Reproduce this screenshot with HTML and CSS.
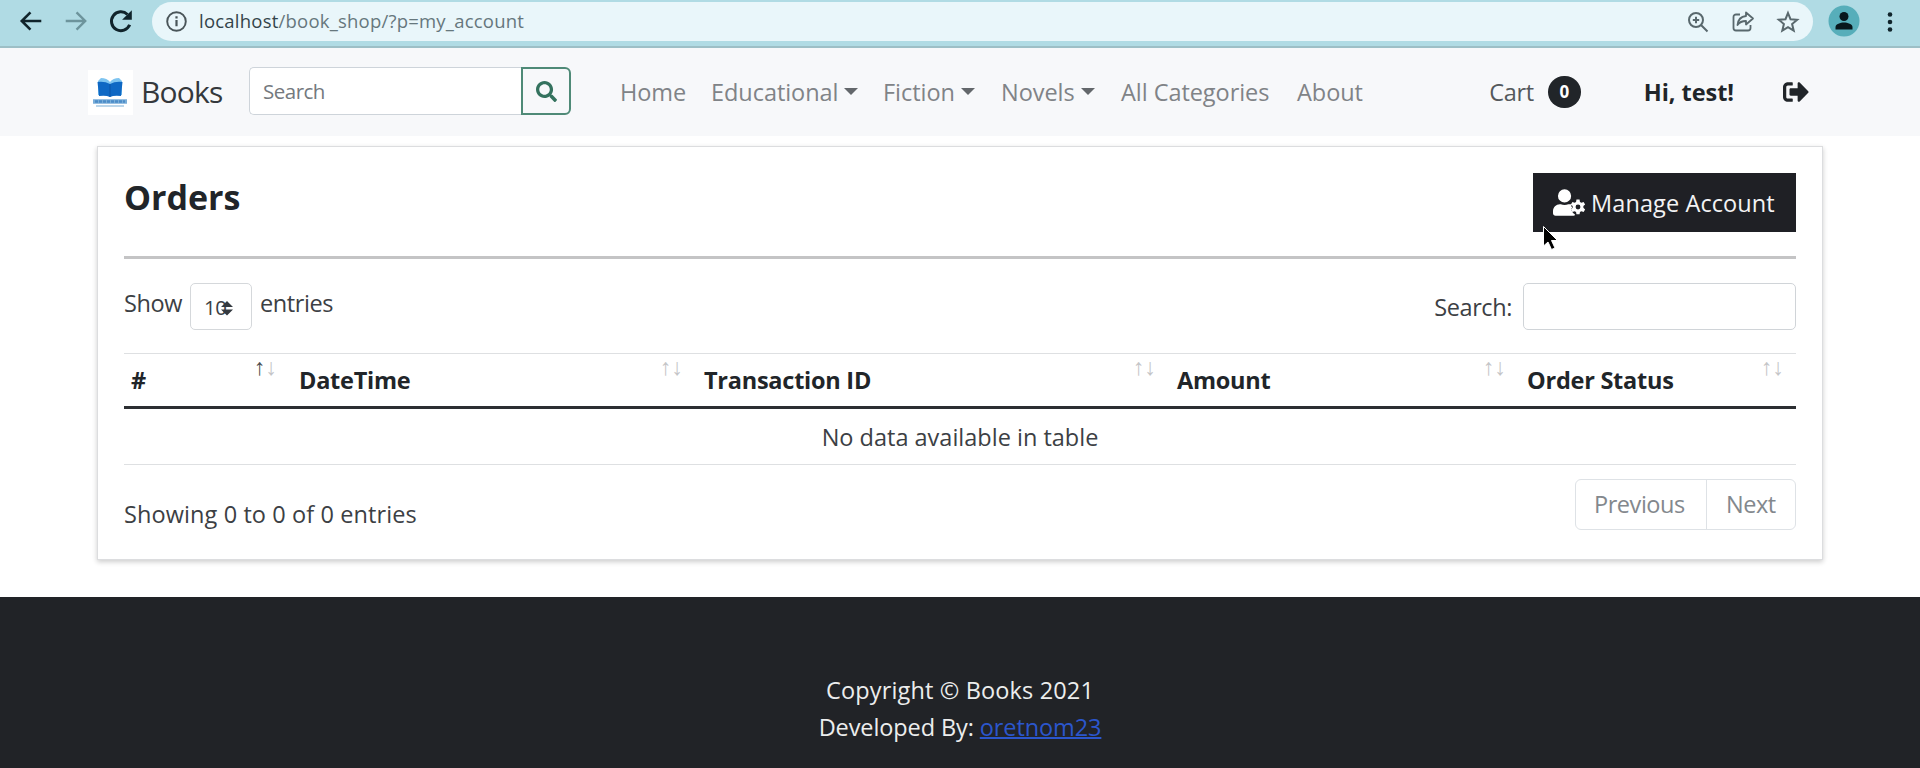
FILE: index.html
```html
<!DOCTYPE html>
<html lang="en">
<head>
<meta charset="utf-8">
<title>Books</title>
<link rel="stylesheet" href="styles.css">
</head>
<body>
<header class="browser">
  <div class="browser-nav">
    <svg class="ico" viewBox="0 0 24 24" width="26" height="26"><path d="M21.500 12H3.500M11.500 4L3.500 12l8 8" fill="none" stroke="#10242b" stroke-width="2.400"/></svg>
    <svg class="ico" viewBox="0 0 24 24" width="26" height="26"><path d="M2.500 12h18M12.500 4l8 8-8 8" fill="none" stroke="#6d949c" stroke-width="2.200"/></svg>
    <svg class="ico" viewBox="0 0 24 24" width="26" height="26"><path d="M20 15.500A8.700 8.700 0 1 1 18 6" fill="none" stroke="#10242b" stroke-width="2.800"/><path d="M22 2v8.800H13z" fill="#10242b"/></svg>
  </div>
  <div class="omnibox">
    <svg viewBox="0 0 24 24" width="23" height="23"><circle cx="12" cy="12" r="9.700" fill="none" stroke="#4a5559" stroke-width="2"/><path d="M12 10.500V17M12 6.500v2.300" stroke="#4a5559" stroke-width="2.300"/></svg>
    <span class="url"><span class="host">localhost</span>/book_shop/?p=my_account</span>
    <div class="omni-actions">
      <svg viewBox="0 0 24 24" width="24" height="24" fill="none" stroke="#59686d" stroke-width="2"><circle cx="10" cy="10" r="7"/><path d="M15 15l6.500 6.500M10 6.800v6.400M6.800 10h6.400"/></svg>
      <svg viewBox="0 0 24 24" width="24" height="24" fill="none" stroke="#59686d" stroke-width="1.800" stroke-linejoin="round"><path d="M9 4.500H5a2.500 2.500 0 0 0-2.500 2.500v11A2.500 2.500 0 0 0 5 20.500h12a2.500 2.500 0 0 0 2.500-2.500v-3"/><path d="M15 2.500l7 6-7 6v-3.500c-4 0-6.500 1-8.500 4 .5-5 3.500-8.500 8.500-9z"/></svg>
      <svg viewBox="0 0 24 24" width="24" height="24" fill="none" stroke="#59686d" stroke-width="2"><path d="M12 3l2.500 6.200 6.700.5-5.100 4.400 1.600 6.500-5.700-3.500-5.700 3.500 1.600-6.500-5.100-4.400 6.700-.5z"/></svg>
    </div>
  </div>
  <svg class="profile" viewBox="0 0 32 32" width="32" height="32"><circle cx="16" cy="16" r="15.500" fill="#57aeba"/><circle cx="16" cy="11.500" r="4.500" fill="#08171c"/><path d="M7.500 24.500v-2.500c0-3 5-4.500 8.500-4.500s8.500 1.500 8.500 4.500v2.500z" fill="#08171c"/></svg>
  <svg class="dots" viewBox="0 0 6 22" width="6" height="22" fill="#10242b"><circle cx="3" cy="3.500" r="2.300"/><circle cx="3" cy="11" r="2.300"/><circle cx="3" cy="18.500" r="2.300"/></svg>
</header>

<nav class="navbar">
  <a class="brand">
    <span class="logo"><svg viewBox="0 0 45 45" width="45" height="45"><path d="M10 11l3-3q6 0 9 4 3-4 9-4l3 3v14H10z" fill="#7ec4f0"/><path d="M9.500 12q7-1 12.500 2 5.500-3 12.500-2l-1.500 14q-7-1-11 1-4-2-11-1z" fill="#0f68c4"/><path d="M22 14v13" stroke="#0a55a8" stroke-width="1"/><path d="M5 31.500h34" stroke="#78add8" stroke-width="4.500"/><path d="M7 31.500h30" stroke="#4b8cc8" stroke-width="2.500" stroke-dasharray="3 1"/><path d="M8 36h28" stroke="#b4d2e8" stroke-width="1.800"/></svg></span>
    <span class="brand-name">Books</span>
  </a>
  <form class="site-search">
    <div class="search-input">Search</div>
    <div class="search-btn"><svg viewBox="0 0 512 512" width="21" height="21"><path fill="#34725e" d="M505 442.700L405.300 343c-4.500-4.500-10.600-7-17-7H372c27.600-35.300 44-79.700 44-128C416 93.100 322.900 0 208 0S0 93.100 0 208s93.100 208 208 208c48.300 0 92.700-16.400 128-44v16.300c0 6.400 2.500 12.500 7 17l99.700 99.700c9.400 9.400 24.600 9.400 33.900 0l28.300-28.300c9.400-9.400 9.400-24.600.1-34zM208 336c-70.700 0-128-57.200-128-128 0-70.700 57.200-128 128-128 70.700 0 128 57.200 128 128 0 70.700-57.200 128-128 128z"/></svg></div>
  </form>
  <ul class="links">
    <li class="l-home">Home</li>
    <li class="l-edu">Educational<i class="caret"></i></li>
    <li class="l-fic">Fiction<i class="caret"></i></li>
    <li class="l-nov">Novels<i class="caret"></i></li>
    <li class="l-all">All Categories</li>
    <li>About</li>
  </ul>
  <div class="user">
    <span class="cart">Cart</span><span class="badge">0</span>
    <b class="hello">Hi, test!</b>
    <svg viewBox="0 0 512 512" width="26" height="26"><path fill="#212529" d="M497 273L329 441c-15 15-41 4.500-41-17v-96H152c-13.300 0-24-10.700-24-24v-96c0-13.300 10.700-24 24-24h136V88c0-21.400 25.900-32 41-17l168 168c9.300 9.400 9.300 24.600 0 34zM192 436v-40c0-6.600-5.400-12-12-12H96c-17.700 0-32-14.300-32-32V160c0-17.700 14.300-32 32-32h84c6.600 0 12-5.400 12-12V76c0-6.600-5.400-12-12-12H96c-53 0-96 43-96 96v192c0 53 43 96 96 96h84c6.600 0 12-5.400 12-12z"/></svg>
  </div>
</nav>

<main class="card">
  <div class="card-head">
    <h1>Orders</h1>
    <a class="manage">
      <svg viewBox="0 0 640 512" width="33" height="27"><path fill="#fff" d="M224 256A128 128 0 1 0 224 0a128 128 0 0 0 0 256zM314 288c-5 0-11 0-17 2-22 9-47 14-73 14s-50-5-73-14c-5-2-11-2-17-2C60 288 0 348 0 422v42c0 26 22 48 48 48h352c9 0 18-3 25-8l-2-22-35-22-40-66 24-42-20-30 16-34z"/><path fill="#fff" fill-rule="evenodd" d="M455 200h60l8 44 28 16 42-16 30 52-34 30v34l34 30-30 52-42-16-28 16-8 44h-60l-8-44-28-16-42 16-30-52 34-30v-34l-34-30 30-52 42 16 28-16zM485 296a47 47 0 1 0 0 94 47 47 0 0 0 0-94z"/></svg>
      <span>Manage Account</span>
      <svg class="pointer" viewBox="0 0 17 26" width="17" height="26"><path d="M1.500 1.500v19.500l4.500-4 3.500 7.500 3.500-1.500-3.500-7.500h6z" fill="#000" stroke="#fff" stroke-width="1"/></svg>
    </a>
  </div>
  <div class="rule"></div>
  <div class="controls">
    <div class="length"><span class="show">Show</span><span class="select">10<svg viewBox="0 0 12 16" width="12" height="16"><path d="M0 7l6-6 6 6zM0 9.500h12l-6 6z" fill="#343a40"/></svg></span><span class="entries">entries</span></div>
    <div class="filter"><span>Search:</span><div class="filter-input"></div></div>
  </div>
  <table class="orders">
    <colgroup><col class="c1"><col class="c2"><col class="c3"><col class="c4"><col class="c5"></colgroup>
    <thead><tr>
      <th>#<span class="sort first"><i class="on">↑</i><i>↓</i></span></th>
      <th>DateTime<span class="sort"><i>↑</i><i>↓</i></span></th>
      <th>Transaction ID<span class="sort"><i>↑</i><i>↓</i></span></th>
      <th>Amount<span class="sort"><i>↑</i><i>↓</i></span></th>
      <th>Order Status<span class="sort last"><i>↑</i><i>↓</i></span></th>
    </tr></thead>
    <tbody><tr><td colspan="5">No data available in table</td></tr></tbody>
  </table>
  <div class="table-foot">
    <div class="info">Showing 0 to 0 of 0 entries</div>
    <div class="pager"><span class="prev">Previous</span><span class="next">Next</span></div>
  </div>
</main>

<footer class="footer">
  <p class="copy">Copyright © Books 2021</p>
  <p class="dev">Developed By: <a>oretnom23</a></p>
</footer>
</body>
</html>
```

FILE: styles.css
```css
* { box-sizing: border-box; }
body {
  margin: 0;
  height: 768px;
  display: flex;
  flex-direction: column;
  overflow: hidden;
  background: #fff;
  color: #3c4044;
  font: 23.5px/36px "Open Sans", "Noto Sans", sans-serif;
  letter-spacing: -0.05px;
}
svg { display: block; flex: none; }

/* browser bar */
.browser {
  flex: none;
  height: 48px;
  display: flex;
  align-items: flex-start;
  padding-top: 2px;
  background: #b0dbe4;
  border-bottom: 2px solid #9dbfc6;
}
.browser-nav { display: flex; gap: 19px; padding: 6px 0 0 18px; width: 152px; }
.omnibox {
  width: 1661px;
  height: 39px;
  border-radius: 20px;
  background: #e9f6fa;
  display: flex;
  align-items: center;
  padding: 0 13px;
}
.url { margin: -2px 0 0 11px; font-size: 18.5px; letter-spacing: 0.22px; color: #66777d; }
.host { color: #33444a; }
.omni-actions { margin-left: auto; display: flex; gap: 21px; }
.profile { margin: 3px 0 0 15px; }
.dots { margin: 9px 0 0 27px; }

/* site navigation */
.navbar {
  flex: none;
  height: 88px;
  background: #f7f8fa;
  display: flex;
  align-items: center;
  padding: 0 111px 0 88px;
}
.brand { display: flex; align-items: center; gap: 8px; width: 161px; color: #34383c; }
.logo { background: #fff; }
.brand-name { font-size: 30px; letter-spacing: -0.8px; }
.site-search { display: flex; width: 322px; height: 48px; margin: -2px 0 0; }
.search-input {
  width: 272px;
  border: 1px solid #ced4da;
  border-right: 0;
  border-radius: 5px 0 0 5px;
  background: #fff;
  padding: 5px 13px;
  font-size: 20.5px;
  letter-spacing: -0.5px;
  color: #74797e;
}
.search-btn {
  width: 50px;
  border: 2px solid #4f8a77;
  border-radius: 0 6px 6px 0;
  display: flex;
  align-items: center;
  justify-content: center;
}
.links { display: flex; list-style: none; margin: 0 0 0 49px; padding: 0; color: #808387; }
.links li { display: flex; align-items: center; white-space: nowrap; }
.l-home { width: 91px; }
.l-edu { width: 172px; }
.l-fic { width: 118px; }
.l-nov { width: 120px; }
.l-all { width: 176px; }
.caret { border: 7px solid transparent; border-top-color: #63676b; border-bottom: 0; margin: -2px 0 0 6px; }
.user { margin-left: auto; display: flex; align-items: center; color: #212529; }
.cart { color: #54585c; letter-spacing: -0.3px; }
.badge {
  width: 33px;
  height: 32px;
  border-radius: 16px;
  margin: 0 63px 0 14px;
  background: #212529;
  color: #fff;
  font: bold 17px/32px "Open Sans", sans-serif;
  text-align: center;
}
.hello { margin-right: 49px; }

/* orders card */
.card {
  flex: none;
  width: 1726px;
  height: 414px;
  margin: 10px auto 37px;
  padding: 26px 26px 0;
  border: 1px solid #dcdddf;
  box-shadow: 0 2px 5px rgba(0, 0, 0, 0.2);
}
.card-head { display: flex; justify-content: space-between; align-items: flex-start; height: 83px; }
h1 { margin: 0; font-size: 34px; line-height: 48px; letter-spacing: 0; color: #212529; }
.manage {
  position: relative;
  width: 263px;
  height: 59px;
  background: #1f2025;
  color: #f3f3f4;
  display: flex;
  align-items: center;
  gap: 5px;
  padding-left: 20px;
  white-space: nowrap;
  letter-spacing: 0.1px;
}
.pointer { position: absolute; left: 9px; top: 52px; }
.rule { height: 3px; background: #c4c4c5; }
.controls { display: flex; justify-content: space-between; height: 94px; padding-top: 24px; letter-spacing: -0.4px; }
.length, .filter { display: flex; }
.select {
  width: 62px;
  height: 47px;
  border: 1px solid #d5d8db;
  border-radius: 5px;
  margin: 0 8px 0 8px;
  padding: 5px 0 0 13px;
  font-size: 20.5px;
  display: flex;
}
.select svg { margin: 11px 0 0 -6px; }
.show, .entries { line-height: 41px; }
.filter { gap: 11px; line-height: 48px; }
.filter-input { width: 273px; height: 47px; border: 1px solid #d0d4d8; border-radius: 5px; }

.orders { width: 1672px; table-layout: fixed; border-collapse: separate; border-spacing: 0; }
.c1 { width: 168px; }
.c2 { width: 405px; }
.c3 { width: 473px; }
.c4 { width: 350px; }
.c5 { width: 276px; }
th {
  position: relative;
  height: 56px;
  padding: 0 7px;
  text-align: left;
  letter-spacing: -0.25px;
  border-top: 1px solid #dee0e2;
  border-bottom: 3px solid #2c2f32;
  color: #212529;
}
.sort {
  position: absolute;
  right: 14px;
  top: 1px;
  display: flex;
  font: 400 23px/24px "Liberation Sans", sans-serif;
  letter-spacing: 0;
  color: #c4c5c7;
}
.sort.first { right: 15px; }
.sort.last { right: 12px; }
.sort i { font-style: normal; }
.sort .on { color: #4a4d50; }
td { height: 56px; padding: 1px 0 0; text-align: center; letter-spacing: 0; border-bottom: 1px solid #dee0e2; }
.table-foot { display: flex; justify-content: space-between; }
.info { padding-top: 31px; letter-spacing: 0.1px; }
.pager {
  margin-top: 14px;
  height: 51px;
  width: 221px;
  display: flex;
  border: 1px solid #dee2e6;
  border-radius: 6px;
  line-height: 49px;
  letter-spacing: -0.45px;
  color: #83888d;
}
.prev { width: 131px; padding-left: 18px; border-right: 1px solid #dee2e6; }
.next { padding-left: 19px; }

/* footer */
.footer { flex: 1; background: #212327; color: #eceded; text-align: center; padding-top: 75px; }
.footer p { margin: 0; line-height: 37px; }
.footer .copy { letter-spacing: 0.15px; }
.footer .dev { letter-spacing: -0.1px; }
.footer a { color: #2b56cc; text-decoration: underline; text-decoration-thickness: 2px; }
```
